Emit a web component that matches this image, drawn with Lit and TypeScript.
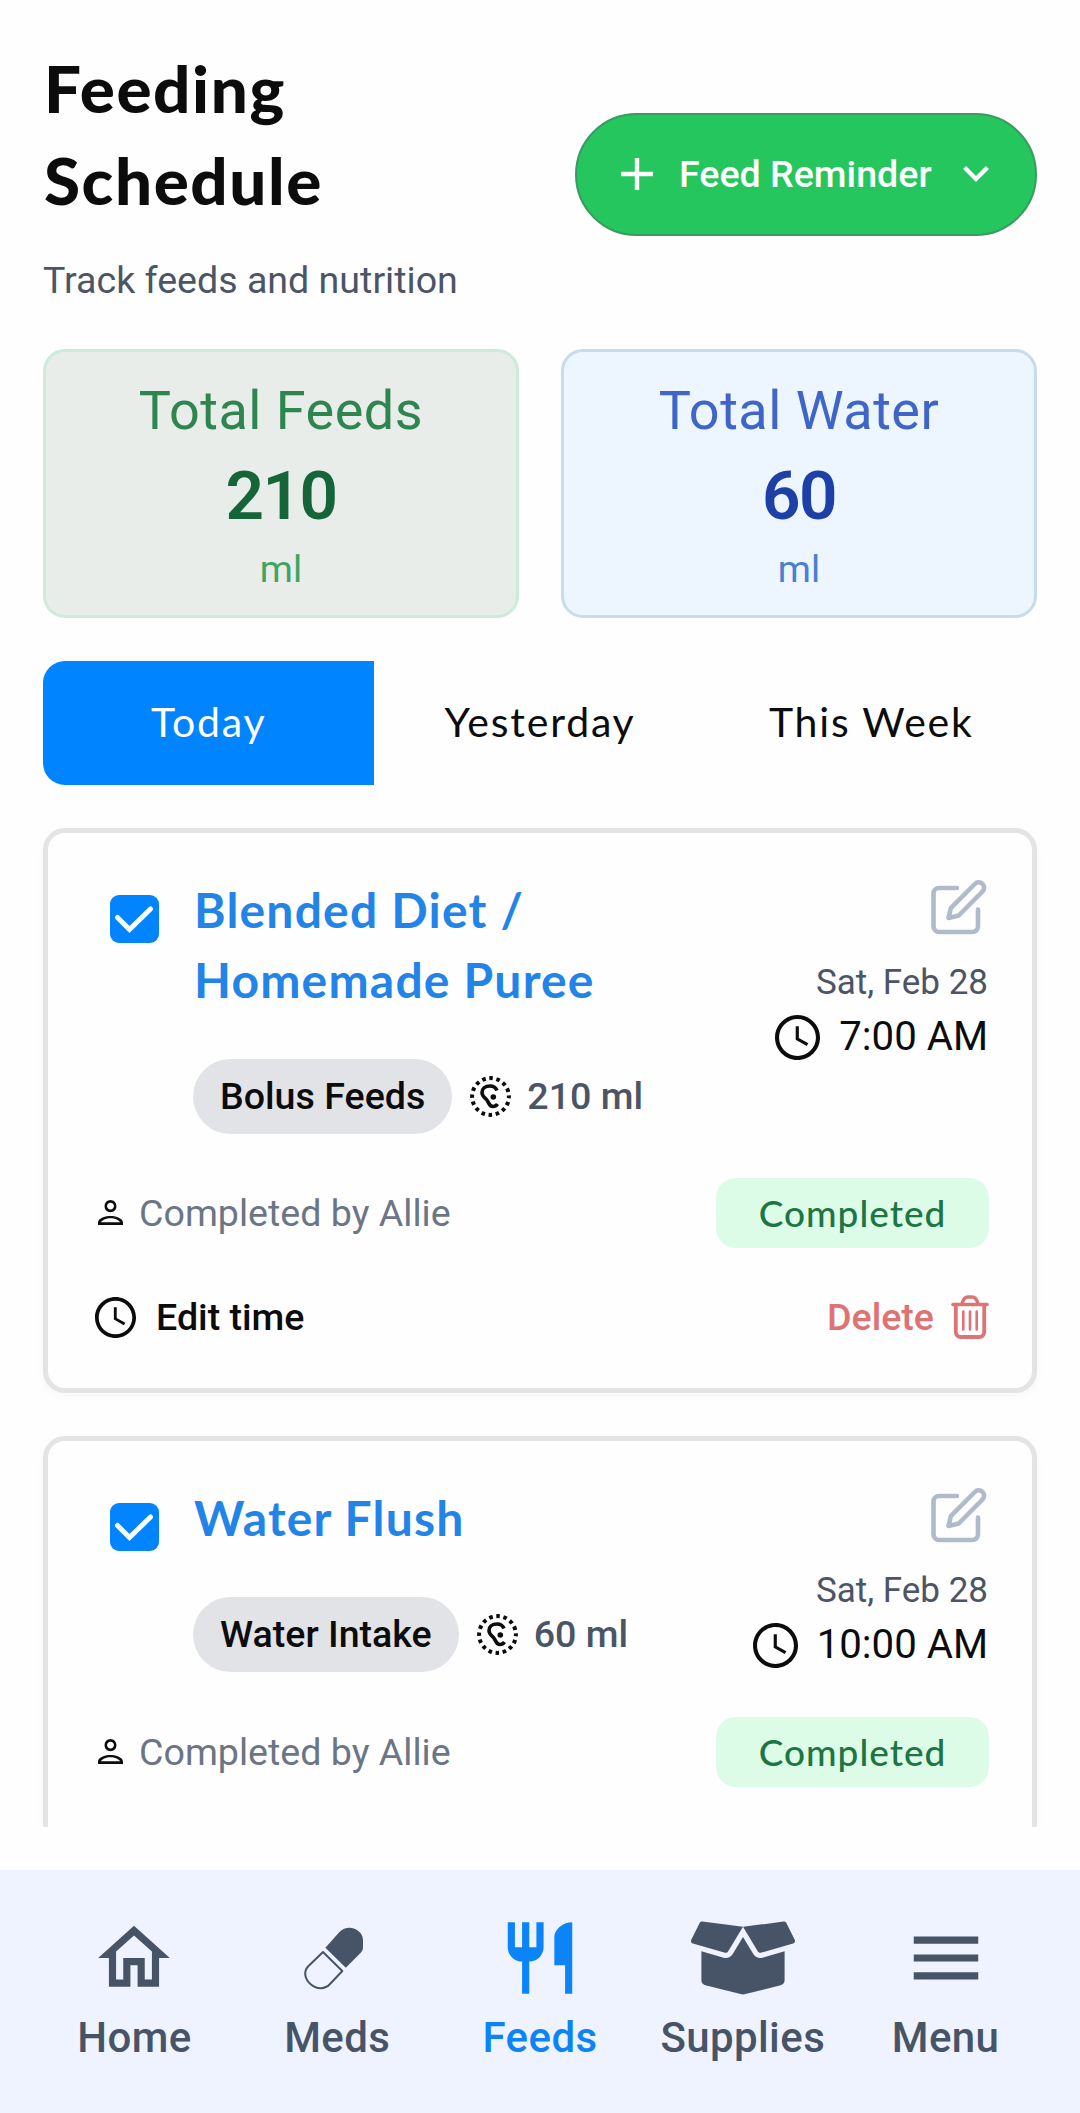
import { LitElement, css, html, nothing, svg } from "lit";
import { customElement, property } from "lit/decorators.js";
import { classMap } from "lit/directives/class-map.js";

const clockIcon = html`<svg class="icon" viewBox="2 2 20 20">
  <path
    fill="currentColor"
    d="M11.99 2C6.47 2 2 6.48 2 12s4.47 10 9.99 10C17.52 22 22 17.52 22 12S17.52 2 11.99 2zM12 20.2c-4.53 0-8.2-3.67-8.2-8.2S7.47 3.8 12 3.8s8.2 3.67 8.2 8.2-3.67 8.2-8.2 8.2zM12.6 7H11.2v6l4.9 2.75.7-1.15-4.2-2.4z"
  />
</svg>`;

const navIcons = {
  home: svg`<path d="M12 5.69l5 4.5V18h-2v-6H9v6H7v-7.81l5-4.5M12 3L2 12h3v8h6v-6h2v6h6v-8h3L12 3z" />`,
  meds: svg`
    <path d="M31.4 32.7L45 17.5C49 13 54 12.5 57.5 13C64 14 69 19 69 25V32C69 35 68 36.5 66.5 38L51.8 52.7z" />
    <path fill="none" stroke="currentColor" stroke-width="2" stroke-linejoin="round" d="M29 37L48.3 56 36 69C31 74.5 23 74.5 17 69.5C10.5 64 9.5 56.5 14 51.5z" />`,
  feeds: svg`<path d="M16 6v8h3v8h2V2c-2.76 0-5 2.24-5 4zm-5 3H9V2H7v7H5V2H3v7c0 2.21 1.79 4 4 4v9h2v-9c2.21 0 4-1.79 4-4V2h-2v7z" />`,
  supplies: svg`<path d="M425.7 256c-16.9 0-32.8-9-41.4-23.4L320 126l-64.2 106.6c-8.7 14.5-24.6 23.5-41.5 23.5-4.5 0-9-.6-13.3-1.9L64 215v178c0 14.7 10 27.5 24.2 31l216.2 54.1c10.2 2.5 20.9 2.5 31 0L551.8 424c14.2-3.6 24.2-16.4 24.2-31V215l-137 39.1c-4.3 1.3-8.8 1.9-13.3 1.9zm212.6-112.2L586.8 41c-3.1-6.2-9.8-9.8-16.7-8.9L320 64l91.7 152.1c3.8 6.3 11.4 9.3 18.5 7.3l197.9-56.5c9.9-2.9 14.7-13.9 10.2-23.1zM53.2 41L1.7 143.8c-4.6 9.2.3 20.2 10.1 23l197.9 56.5c7.1 2 14.7-1 18.5-7.3L320 64 69.8 32.1c-6.9-.8-13.5 2.7-16.6 8.9z" />`,
  menu: svg`<path d="M3 18h18v-2H3v2zm0-5h18v-2H3v2zm0-7v2h18V6H3z" />`,
};

const navItems = [
  { label: "Home", icon: navIcons.home, box: "0 0 24 24" },
  { label: "Meds", icon: navIcons.meds, box: "0 0 86 86" },
  { label: "Feeds", icon: navIcons.feeds, box: "0 0 24 24", active: true },
  { label: "Supplies", icon: navIcons.supplies, box: "0 0 640 512", wide: true },
  { label: "Menu", icon: navIcons.menu, box: "0 0 24 24" },
];

@customElement("feed-card")
export class FeedCard extends LitElement {
  @property({ type: String }) name = "";
  @property({ type: String }) kind = "";
  @property({ type: String }) amount = "";
  @property({ type: String }) date = "";
  @property({ type: String }) time = "";
  @property({ type: String }) by = "";
  @property({ type: Boolean }) editable = false;

  private renderActions() {
    return html`
      <div class="actions">
        <span class="edit-time">${clockIcon}Edit time</span>
        <span class="delete">
          Delete
          <svg class="trash" viewBox="0 0 38 44" fill="none" stroke="currentColor" stroke-linecap="round">
            <path d="M2 9.5h34" stroke-width="3.6" />
            <path d="M11 9c1-4.5 3-7 6-7h4c3 0 5 2.5 6 7" stroke-width="3.4" />
            <path d="M4.8 10v27a5 5 0 0 0 5 5h18.4a5 5 0 0 0 5-5V10" stroke-width="3.8" />
            <path d="M12.3 16.5v18M19 16.5v18M25.7 16.5v18" stroke-width="2.6" />
          </svg>
        </span>
      </div>
    `;
  }

  protected override render() {
    return html`
      <div class="top">
        <svg class="check" viewBox="0 0 49 48">
          <rect width="49" height="48" rx="9" fill="#0084ff" />
          <path d="M7.5 22.5L19.5 34.5 40.5 14" fill="none" stroke="#fff" stroke-width="5" stroke-linecap="round" />
        </svg>
        <div class="info">
          <h2>${this.name}</h2>
          <div class="details">
            <span class="chip">${this.kind}</span>
            <svg class="dose" viewBox="0 0 41 41" fill="none" stroke="#0c0c0d">
              <circle cx="20.5" cy="20.5" r="18.4" stroke-width="4" stroke-dasharray="3.6 3.625" stroke-dashoffset="1.8" />
              <path d="M27 14.5C25.8 11.5 23.3 10 20 10C15 10 12 13 12 16.5C12 20.5 15.5 22 17.5 25C19 27.5 19.500 30.5 23 30.5C25 30.5 26.5 29.5 27.5 28" stroke-width="3.6" />
              <circle cx="23.3" cy="21" r="2.8" fill="#0c0c0d" stroke="none" />
            </svg>
            <span class="amount">${this.amount}</span>
          </div>
        </div>
        <div class="when">
          <svg class="edit" viewBox="0 0 56 56" fill="none" stroke="#b0bacb" stroke-width="4.6" stroke-linecap="round" stroke-linejoin="round">
            <path d="M26 8H8a5.5 5.5 0 0 0-5.5 5.5v33A5.5 5.5 0 0 0 8 52h33.5a5.5 5.5 0 0 0 5.5-5.5V29.5" />
            <path d="M17.5 38l2.3-9.8L43.8 4a5.3 5.3 0 0 1 7.7 7.5L27.7 35.5z" />
          </svg>
          <span class="date">${this.date}</span>
          <span class="time">${clockIcon}${this.time}</span>
        </div>
      </div>
      <div class="status">
        <svg class="person" viewBox="4 4 16 16" fill="#0c0c0d">
          <path d="M12 5.7c1.2 0 2.2 1 2.2 2.2s-1 2.2-2.2 2.2-2.2-1-2.2-2.2 1-2.2 2.2-2.2m0 9.9c2.7 0 5.8 1.39 6.2 2.7H5.8c.4-1.32 3.5-2.7 6.2-2.7m0-11.6C9.79 4 8.2 5.79 8.2 8s1.59 3.8 3.8 3.8 3.8-1.59 3.8-3.8S14.21 4 12 4zm0 10.2c-2.67 0-8 1.14-8 4.3v1.5h16v-1.5c0-3.16-5.33-4.3-8-4.3z" />
        </svg>
        <span class="by">Completed by ${this.by}</span>
        <span class="badge">Completed</span>
      </div>
      ${this.editable ? this.renderActions() : nothing}
    `;
  }

  static override styles = css`
    :host {
      display: block;
      box-sizing: border-box;
      flex: none;
      min-height: 480px;
      border: 5px solid #e4e4e6;
      border-radius: 22px;
      padding: 40px 43px 44px 47px;
      background: #fefefe;
      box-shadow: 0 3px 8px rgba(0, 0, 0, 0.03);
    }
    .top {
      display: flex;
    }
    .check {
      width: 49px;
      height: 48px;
      margin: 22px 34px 0 15px;
      flex: none;
    }
    .info {
      flex: 1;
      min-width: 0;
    }
    h2 {
      margin: 0;
      max-width: 430px;
      padding: 2px 0 0 1px;
      font: 700 48px/70px Lato, sans-serif;
      letter-spacing: 1.2px;
      color: #2384e8;
    }
    .details {
      display: flex;
      align-items: center;
      margin-top: 44px;
      font: 500 37.6px/75px Roboto, sans-serif;
      white-space: nowrap;
    }
    .chip {
      padding: 0 27px;
      border-radius: 38px;
      background: #e2e3e6;
      color: #0c0c0d;
    }
    .dose {
      width: 41px;
      height: 41px;
      margin: 0 16px 0 18px;
    }
    .amount {
      color: #4b5565;
    }
    .when {
      display: flex;
      flex-direction: column;
      align-items: flex-end;
      flex: none;
      color: #0c0c0d;
    }
    .edit {
      width: 56px;
      height: 56px;
      margin: 7px 2px 23px 0;
    }
    .date {
      padding-right: 1px;
      font: 400 35px/48px Roboto, sans-serif;
      color: #4b5565;
    }
    .time {
      display: flex;
      align-items: center;
      gap: 19px;
      margin-top: 2px;
      padding-right: 1px;
      font: 400 40.2px/56px Roboto, sans-serif;
    }
    .time .icon {
      width: 45px;
      height: 45px;
    }
    .status {
      display: flex;
      align-items: center;
      margin-top: 43px;
      height: 71px;
    }
    .person {
      width: 25px;
      height: 25px;
      margin: 0 16px 0 3px;
    }
    .by {
      flex: 1;
      font: 400 37.6px/54px Roboto, sans-serif;
      color: #6b7585;
    }
    .badge {
      width: 273px;
      border-radius: 20px;
      background: #dcfce7;
      text-align: center;
      font: 500 37px/70px Lato, sans-serif;
      letter-spacing: 1px;
      color: #1d7544;
    }
    .actions {
      display: flex;
      align-items: center;
      justify-content: space-between;
      margin-top: 42px;
      height: 54px;
      font: 500 37.6px/54px Roboto, sans-serif;
      color: #0c0c0d;
    }
    .edit-time,
    .delete {
      display: flex;
      align-items: center;
    }
    .edit-time {
      gap: 20px;
    }
    .edit-time .icon {
      width: 41px;
      height: 41px;
    }
    .delete {
      gap: 17px;
      color: #dd7373;
    }
    .trash {
      width: 38px;
      height: 44px;
    }
  `;
}

@customElement("app-root")
export class AppRoot extends LitElement {
  protected override render() {
    return html`
      <main>
        <header>
          <div>
            <h1>Feeding<br />Schedule</h1>
            <p class="subtitle">Track feeds and nutrition</p>
          </div>
          <button class="reminder">
            <svg class="plus" viewBox="0 0 32 32"><path d="M16 0v32M0 16h32" stroke="#fff" stroke-width="4.4" /></svg>
            <span class="reminder-label">Feed Reminder</span>
            <svg class="chevron" viewBox="6 8.59 12 7.41"><path fill="#fff" d="M16.59 8.59L12 13.17 7.41 8.59 6 10l6 6 6-6z" /></svg>
          </button>
        </header>
        <section class="totals">
          <div class="total feeds">
            <span class="total-title">Total Feeds</span>
            <span class="total-value">210</span>
            <span class="total-unit">ml</span>
          </div>
          <div class="total water">
            <span class="total-title">Total Water</span>
            <span class="total-value">60</span>
            <span class="total-unit">ml</span>
          </div>
        </section>
        <div class="tabs">
          <span class="tab selected">Today</span>
          <span class="tab">Yesterday</span>
          <span class="tab">This Week</span>
        </div>
        <section class="list">
          <feed-card
            name="Blended Diet / Homemade Puree"
            kind="Bolus Feeds"
            amount="210 ml"
            date="Sat, Feb 28"
            time="7:00 AM"
            by="Allie"
            editable
          ></feed-card>
          <feed-card
            name="Water Flush"
            kind="Water Intake"
            amount="60 ml"
            date="Sat, Feb 28"
            time="10:00 AM"
            by="Allie"
          ></feed-card>
        </section>
      </main>
      <nav>
        ${navItems.map(
          (item) => html`
            <a class=${classMap({ item: true, active: !!item.active })}>
              <svg
                class=${classMap({ glyph: true, wide: !!item.wide })}
                viewBox=${item.box}
                fill="currentColor"
              >
                ${item.icon}
              </svg>
              <span>${item.label}</span>
            </a>
          `
        )}
      </nav>
    `;
  }

  static override styles = css`
    :host {
      display: flex;
      flex-direction: column;
      height: 2113px;
      overflow: hidden;
      background: #fefefe;
      font-family: Roboto, sans-serif;
      color: #0c0c0d;
    }
    main {
      flex: none;
      box-sizing: border-box;
      height: 1827px;
      padding: 39px 43px 0;
      overflow: hidden;
    }
    header {
      display: flex;
      align-items: center;
      justify-content: space-between;
      height: 270px;
    }
    h1 {
      margin: 0;
      padding: 3px 0 0 1px;
      font: 900 65.5px/91.7px Lato, sans-serif;
      letter-spacing: 1.6px;
    }
    .subtitle {
      margin: 26px 0 0;
      font-size: 37.6px;
      line-height: 57px;
      color: #4b5565;
    }
    .reminder {
      display: flex;
      align-items: center;
      box-sizing: border-box;
      width: 462px;
      height: 123px;
      padding: 0 46px 0 44px;
      border: 2px solid #3a9a62;
      border-radius: 62px;
      background: #24c65d;
      color: #fff;
    }
    .plus {
      width: 32px;
      height: 32px;
    }
    .reminder-label {
      flex: 1;
      padding-left: 26px;
      text-align: left;
      font: 500 37.6px/54px Roboto, sans-serif;
      white-space: nowrap;
    }
    .chevron {
      width: 26px;
      height: 16px;
    }
    .totals {
      display: grid;
      grid-template-columns: 1fr 1fr;
      gap: 42px;
      margin-top: 40px;
    }
    .total {
      display: flex;
      flex-direction: column;
      align-items: center;
      box-sizing: border-box;
      height: 269px;
      padding-top: 18px;
      border: 3px solid #cdebdb;
      border-radius: 22px;
      background: #e8edea;
    }
    .total-title {
      font-size: 54px;
      line-height: 81px;
      letter-spacing: 0.5px;
      color: #2f8550;
    }
    .total-value {
      font-size: 67.5px;
      line-height: 90px;
      font-weight: 600;
      letter-spacing: -1.5px;
      color: #166538;
    }
    .total-unit {
      font-size: 37.8px;
      line-height: 56px;
      color: #3fa463;
    }
    .total.water {
      border-color: #c6dcea;
      background: #edf5ff;
    }
    .water .total-title {
      color: #3f66c6;
    }
    .water .total-value {
      color: #1e3fa6;
    }
    .water .total-unit {
      color: #4b7ed2;
    }
    .tabs {
      display: grid;
      grid-template-columns: repeat(3, 1fr);
      margin-top: 43px;
    }
    .tab {
      height: 124px;
      text-align: center;
      font: 400 41px/121px Lato, sans-serif;
      letter-spacing: 1.8px;
    }
    .tab.selected {
      border-radius: 22px 0 0 22px;
      background: #0084ff;
      color: #fff;
    }
    .list {
      display: flex;
      flex-direction: column;
      gap: 43px;
      margin-top: 43px;
    }
    nav {
      display: flex;
      flex: none;
      box-sizing: border-box;
      height: 243px;
      margin-top: 43px;
      padding: 45px 33px 0;
      background: #eff3ff;
    }
    .item {
      display: flex;
      flex: 1;
      flex-direction: column;
      align-items: center;
      font-size: 42px;
      font-weight: 500;
      line-height: 62px;
      letter-spacing: 0.4px;
      color: #475467;
    }
    .item.active {
      color: #0c84f8;
    }
    .glyph {
      width: 86px;
      height: 86px;
      margin-bottom: 6px;
    }
    .glyph.wide {
      width: 104px;
    }
  `;
}

declare global {
  interface HTMLElementTagNameMap {
    "feed-card": FeedCard;
    "app-root": AppRoot;
  }
}
